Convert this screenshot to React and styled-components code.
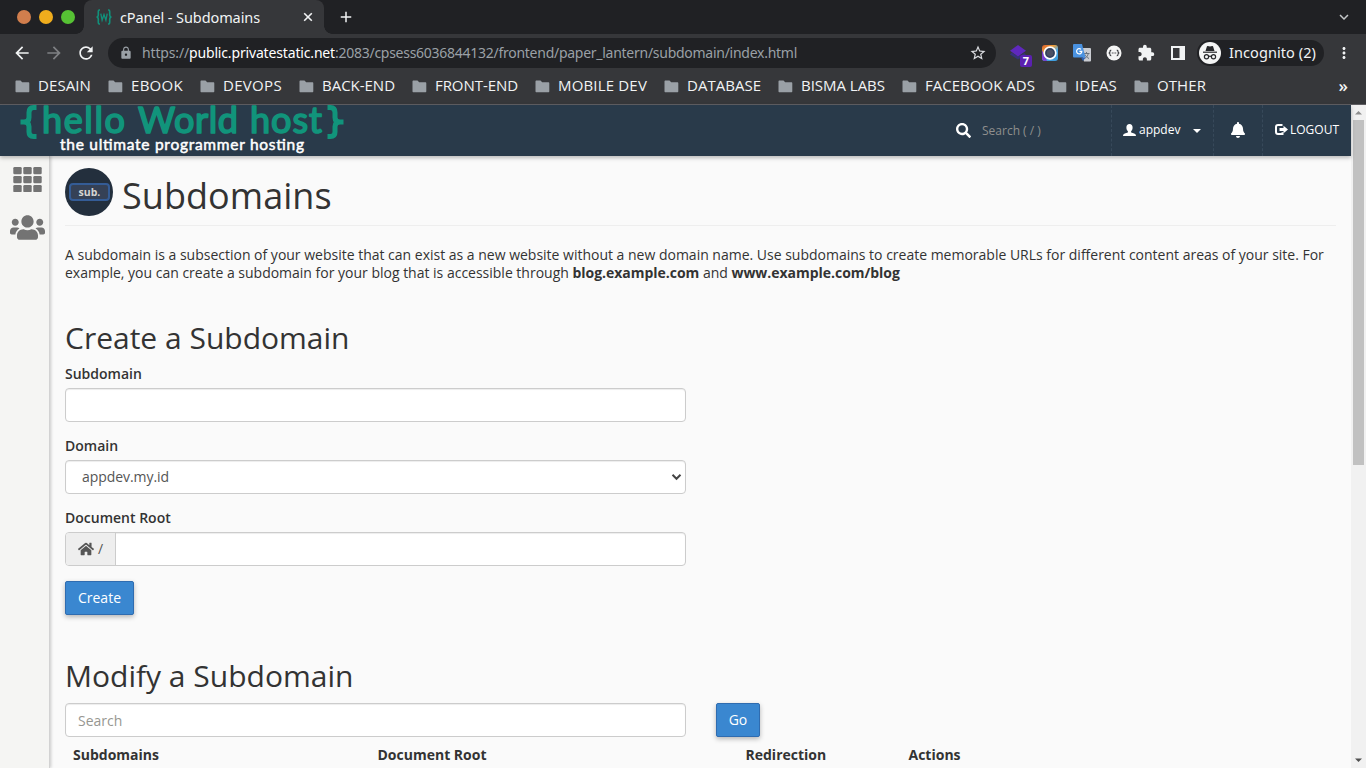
import React, { useLayoutEffect, useRef } from 'react';
import styled, { createGlobalStyle, css } from 'styled-components';
import {
  MdArrowBack, MdArrowForward, MdRefresh, MdLock, MdStarBorder, MdExtension,
  MdAdd, MdMoreVert, MdKeyboardArrowDown,
} from 'react-icons/md';
import { FaSearch, FaHome, FaUsers, FaBell } from 'react-icons/fa';

const Global = createGlobalStyle`
  * { box-sizing: border-box; }
  html, body { margin: 0; height: 768px; overflow: hidden; }
  body { font: 14px/18px "Open Sans", sans-serif; color: #333; background: #fafafa; }
  h1, h2, p { margin: 0; font-weight: 400; }
  svg { display: block; flex: none; }
`;

const Window = styled.div`
  width: 1366px;
  height: 768px;
  display: flex;
  flex-direction: column;
  overflow: hidden;
`;

/* Label whose letter spacing is tuned so it fills a fixed width. */
const FitSpan = styled.span`
  white-space: pre;
  flex: none;
`;
function Fit({ width, children, ...rest }) {
  const ref = useRef(null);
  useLayoutEffect(() => {
    const el = ref.current;
    el.style.letterSpacing = '0px';
    const natural = el.getBoundingClientRect().width;
    const spacing = (width - natural) / el.textContent.length;
    el.style.letterSpacing = `${spacing}px`;
  }, [width, children]);
  return <FitSpan ref={ref} {...rest}>{children}</FitSpan>;
}

/* ---------- browser frame ---------- */
const TabStrip = styled.div`
  height: 34px;
  flex: none;
  background: #202124;
  display: flex;
  align-items: center;
  padding: 0 13px 0 17px;
  font-family: "Noto Sans", sans-serif;
  color: #f1f3f4;
`;
const Lights = styled.div`
  display: flex;
  gap: 8px;
  width: 67px;
`;
const Light = styled.i`
  width: 14px;
  height: 14px;
  border-radius: 50%;
  background: ${(p) => p.$c};
`;
const Tab = styled.div`
  width: 240px;
  height: 34px;
  display: flex;
  align-items: center;
  padding: 0 11px 0 12px;
  background: #36373a;
  border-radius: 8px 8px 0 0;
  color: #f1f3f4;
  font-size: 14.5px;
  position: relative;
  & > span { margin-top: -1px; }
  & > svg:last-child { margin-left: auto; }
  &::before, &::after {
    content: "";
    position: absolute;
    bottom: 0;
    width: 8px;
    height: 8px;
  }
  &::before { left: -8px; background: radial-gradient(circle at 0 0, transparent 7.5px, #36373a 8px); }
  &::after { right: -8px; background: radial-gradient(circle at 100% 0, transparent 7.5px, #36373a 8px); }
`;
const Favicon = styled.svg`
  margin-right: 8px;
`;
const NewTab = styled.div`
  margin-left: 13px;
  flex: 1;
`;

const Toolbar = styled.div`
  height: 38px;
  flex: none;
  background: #36373a;
  display: flex;
  align-items: center;
  padding: 0 13px 0 12px;
  color: #f1f3f4;
  font-family: "Noto Sans", sans-serif;
`;
const NavButtons = styled.div`
  display: flex;
  align-items: center;
  gap: 12px;
  width: 96px;
  & > :nth-child(2) { color: #7f8184; }
`;
const Omnibox = styled.div`
  width: 888px;
  height: 30px;
  border-radius: 15px;
  background: #202124;
  display: flex;
  align-items: center;
  padding: 0 9px 0 11px;
  color: #9aa0a6;
  font-size: 14px;
  & > svg:first-child { margin-right: 9px; }
  & > svg:last-child { margin-left: auto; color: #dadce0; }
`;
const Host = styled(Fit)`color: #fff;`;
const Extensions = styled.div`
  margin-left: 13px;
  display: flex;
  align-items: center;
  gap: 14px;
  width: 188px;
`;
const PurpleExt = styled.div`
  position: relative;
  width: 18px;
  height: 18px;
`;
const ExtBadge = styled.span`
  position: absolute;
  left: 11px;
  top: 11px;
  width: 12px;
  height: 12px;
  border-radius: 2px;
  background: #5b21b0;
  color: #fff;
  font: bold 11px/12px "Noto Sans", sans-serif;
  text-align: center;
`;
const Incognito = styled.div`
  width: 127px;
  height: 26px;
  border-radius: 13px;
  background: #202124;
  display: flex;
  align-items: center;
  gap: 8px;
  padding-left: 2px;
  font-size: 14.5px;
  & > span { margin-top: -2px; }
`;
const MenuDots = styled.div`
  margin-left: auto;
`;

const Bookmarks = styled.div`
  height: 33px;
  flex: none;
  background: #36373a;
  border-bottom: 1px solid #5f5e62;
  display: flex;
  align-items: center;
  gap: 17px;
  padding: 0 18px 4px 15px;
  font: 15px/20px "Open Sans", sans-serif;
  color: #f1f3f4;
`;
const Bookmark = styled.div`
  display: flex;
  align-items: center;
  gap: 8px;
  & > span { margin: -2px 0 0; }
`;
const More = styled.span`
  margin: -1px 0 0 auto;
  font-size: 17px;
  font-weight: 600;
`;

/* ---------- page ---------- */
const PageArea = styled.div`
  flex: 1;
  min-height: 0;
  display: flex;
`;
const Page = styled.div`
  width: 1351px;
  display: flex;
  flex-direction: column;
`;
const Header = styled.header`
  height: 51px;
  flex: none;
  background: #293a4a;
  box-shadow: 0 2px 4px rgba(0, 0, 0, 0.26);
  position: relative;
  display: flex;
  color: #fff;
  font-size: 12px;
`;
const LogoSvg = styled.svg`
  margin-left: 18px;
  overflow: visible;
`;
const HeaderSearch = styled.div`
  margin-left: auto;
  width: 155px;
  display: flex;
  align-items: center;
  gap: 11px;
  color: #8f8f8d;
  & > svg { color: #fff; margin-bottom: 1px; }
`;
const HeaderItem = styled.div`
  width: ${(p) => p.$w}px;
  border-left: 1px dashed #37495a;
  display: flex;
  align-items: center;
  padding-left: ${(p) => p.$pad}px;
  padding-bottom: 2px;
  gap: ${(p) => p.$gap || 2}px;
  & > svg:nth-of-type(2) { margin-left: 10px; margin-top: 3px; }
`;
const Body = styled.div`
  flex: 1;
  min-height: 0;
  display: flex;
`;
const Sidebar = styled.nav`
  width: 50px;
  flex: none;
  background: #f5f5f3;
  border-right: 1px solid #d2d2d2;
  box-shadow: 1px 0 3px rgba(0, 0, 0, 0.2);
  padding: 11px 0 0 10px;
  display: flex;
  flex-direction: column;
  gap: 18px;
  color: #737373;
`;
const Main = styled.main`
  flex: 1;
  min-width: 0;
  padding: 12px 15px 0;
  overflow: hidden;
`;
const TitleRow = styled.div`
  display: flex;
  gap: 9px;
  height: 58px;
  border-bottom: 1px solid #eee;
`;
const Title = styled.h1`
  font-size: 36px;
  line-height: 40px;
  padding-top: 8px;
  letter-spacing: 0.05px;
`;
const Disc = styled.div`
  width: 48px;
  height: 48px;
  border-radius: 50%;
  background: #232f3d;
  display: flex;
  align-items: center;
  justify-content: center;
`;
const DiscTag = styled.span`
  width: 41px;
  height: 18px;
  border: 2px solid #345c96;
  border-radius: 4px;
  background: #354156;
  color: #d5d5d2;
  font: bold 10.5px/14px "Open Sans", sans-serif;
  text-align: center;
  padding-left: 1px;
`;
const Intro = styled.p`
  margin-top: 20px;
  letter-spacing: -0.006px;
  & b { letter-spacing: -0.03px; }
`;
const Heading = styled.h2`
  font-size: 30px;
  line-height: 33px;
  margin-top: ${(p) => p.$top}px;
`;
const Field = styled.div`
  width: 621px;
  margin-top: ${(p) => p.$top}px;
`;
const Label = styled.div`
  font-weight: 600;
  margin-bottom: 5px;
`;
const boxed = css`
  height: 34px;
  border: 1px solid #ccc;
  border-radius: 4px;
  background: #fff;
  box-shadow: inset 0 1px 1px rgba(0, 0, 0, 0.075);
`;
const Box = styled.div`
  ${boxed}
  width: 621px;
  display: flex;
  align-items: center;
  color: #555;
`;
const Select = styled(Box)`
  justify-content: space-between;
  padding: 0 3px 0 16px;
  letter-spacing: -0.06px;
`;
const Addon = styled.span`
  width: 50px;
  height: 32px;
  background: #eee;
  border-right: 1px solid #ccc;
  border-radius: 3px 0 0 3px;
  display: flex;
  align-items: center;
  gap: 4px;
  padding-left: 12px;
`;
const SearchBox = styled(Box)`
  padding: 1px 0 0 12px;
  color: #979791;
`;
const Button = styled.button`
  height: 34px;
  width: ${(p) => p.$w}px;
  padding: 0;
  border: 1px solid #2f6cb0;
  border-radius: 2px;
  background: #3a87d0;
  color: #fff;
  font: 14px/20px "Open Sans", sans-serif;
  box-shadow: 0 2px 5px rgba(0, 0, 0, 0.28);
  margin-top: ${(p) => p.$top || 0}px;
`;
const SearchRow = styled.div`
  display: flex;
  gap: 30px;
  margin-top: 11px;
`;
const TableHead = styled.div`
  display: grid;
  grid-template-columns: 304.5px 368px 163px 1fr;
  padding: 9px 8px 0;
  font-weight: 700;
`;
const Scrollbar = styled.div`
  width: 15px;
  background: #f1f1f1;
  display: flex;
  flex-direction: column;
  align-items: center;
  justify-content: space-between;
  padding: 5px 0;
`;
const Thumb = styled.div`
  width: 11px;
  height: 345px;
  background: #c1c1c1;
  margin: 5px 0 auto;
`;

const BOOKMARKS = [
  ['DESAIN', 53], ['EBOOK', 52], ['DEVOPS', 59], ['BACK-END', 73], ['FRONT-END', 83],
  ['MOBILE DEV', 89], ['DATABASE', 74], ['BISMA LABS', 84], ['FACEBOOK ADS', 110],
  ['IDEAS', 42], ['OTHER', 49],
];

const FolderIcon = () => (
  <svg width="15" height="13" viewBox="0 0 15 13">
    <path d="M1.500 0.500h4l1.700 1.800h6.100c.6 0 1 .4 1 1v8c0 .6-.4 1-1 1H1.500c-.6 0-1-.4-1-1V1.500c0-.6.4-1 1-1z" fill="#9aa0a6" />
  </svg>
);

const CloseIcon = () => (
  <svg width="10" height="10" viewBox="0 0 10 10">
    <path d="M1.200 1.200l7.600 7.600M8.800 1.200l-7.600 7.600" stroke="#f1f3f4" strokeWidth="1.600" />
  </svg>
);

const Logo = () => (
  <LogoSvg width="330" height="51" viewBox="0 0 330 51">
    <g fill="none" stroke="#11947b" strokeWidth="5">
      <path d="M18.500 2.500h-3q-4.500 0-4.500 5v5q0 4.500-5 4.500h-3.500h3.500q5 0 5 4.500v5.500q0 4.500 4.500 4.500h3" />
      <path d="M309.500 2.500h3q4.500 0 4.500 5v5q0 4.500 5 4.500h3.500h-3.500q-5 0-5 4.500v5.500q0 4.500-4.500 4.500h-3" />
    </g>
    <g fill="#11947b" stroke="#11947b" strokeWidth="1.700" strokeLinejoin="round" fontFamily="Lato, sans-serif" fontWeight="400" fontSize="36">
      <text x="24" y="27.500" textLength="83" lengthAdjust="spacing">hello</text>
      <text x="120" y="27.500" textLength="100" lengthAdjust="spacing">World</text>
      <text x="232" y="27.500" textLength="72" lengthAdjust="spacing">host</text>
    </g>
    <text x="42" y="45" fill="#fff" stroke="#fff" strokeWidth="0.5" fontFamily="Lato, sans-serif" fontWeight="400" fontSize="15.500" textLength="244">the ultimate programmer hosting</text>
  </LogoSvg>
);

const StackIcon = () => (
  <svg width="18" height="18" viewBox="0 0 18 18">
    <path d="M1 10.500l8 5 8-5-1.500-1.500L9 12.500 2.500 8.500z" fill="#35327a" />
    <path d="M9 1l8 5.800-8 5.700-8-5.700z" fill="#5f28bd" />
  </svg>
);

const CameraIcon = () => (
  <svg width="18" height="18" viewBox="0 0 18 18">
    <defs>
      <linearGradient id="cam" x1="0" y1="0" x2="0.6" y2="1">
        <stop offset="0" stopColor="#d95a2c" />
        <stop offset="0.35" stopColor="#efa03a" />
        <stop offset="0.65" stopColor="#4ca9e8" />
        <stop offset="1" stopColor="#3f9ddd" />
      </linearGradient>
    </defs>
    <rect x="1" y="1" width="16" height="16" rx="3" fill="url(#cam)" />
    <path d="M1 6v8a3 3 0 0 0 3 3h2z" fill="#7b3fd0" />
    <circle cx="9" cy="9" r="5.800" fill="#33405c" stroke="#fff" strokeWidth="1.700" />
    <circle cx="9" cy="9" r="3.200" fill="#4b5064" />
  </svg>
);

const TranslateIcon = () => (
  <svg width="18" height="18" viewBox="0 0 18 18">
    <path d="M7 4h10a1 1 0 0 1 1 1v11.500a1 1 0 0 1-1 1h-6z" fill="#c9ccd1" />
    <path d="M10.500 9.500h6M13.500 8v1.500M11.500 14.500c2-1 3.300-2.600 3.800-5M12 10.500c.8 1.800 2 3 4 4" fill="none" stroke="#69737e" strokeWidth="1" />
    <path d="M1 0h8l3.500 13.500H1a1 1 0 0 1-1-1V1a1 1 0 0 1 1-1z" fill="#4a92e0" />
    <path d="M8 13.500h4.500L10 17z" fill="#2d62b5" />
    <path d="M8 5.400a2.600 2.600 0 1 0 .8 2H6.400" fill="none" stroke="#fff" strokeWidth="1.200" />
  </svg>
);

const BracesIcon = () => (
  <svg width="18" height="18" viewBox="0 0 18 18">
    <circle cx="9" cy="9" r="7.500" fill="#f5f5f5" />
    <g fill="none" stroke="#35363a" strokeWidth="1.100">
      <path d="M6.300 6.300H5.900q-.9 0-.9.9v.9l-.9.900.9.900v.9q0 .9.900.9h.4M11.700 6.300h.4q.9 0 .9.9v.9l.9.900-.9.900v.9q0 .9-.9.900h-.4" />
      <path d="M6.800 9h4.400" strokeDasharray="1 .7" />
    </g>
  </svg>
);

const IncognitoIcon = () => (
  <svg width="22" height="22" viewBox="0 0 22 22">
    <circle cx="11" cy="11" r="11" fill="#f4f5f5" />
    <path d="M6.500 9l1.400-4.600q.2-.6.900-.4l2.200.6 2.200-.6q.7-.2.9.4L15.500 9z" fill="#26272a" />
    <path d="M4 9.600h14v1.200H4z" fill="#26272a" />
    <g fill="none" stroke="#26272a" strokeWidth="1.200">
      <circle cx="7.500" cy="14.800" r="2.100" />
      <circle cx="14.500" cy="14.800" r="2.100" />
      <path d="M9.600 14.500q1.400-.8 2.800 0" />
    </g>
  </svg>
);

const PanelIcon = () => (
  <svg width="18" height="18" viewBox="0 0 18 18">
    <path d="M2 2h14v14H2zM4 4v10h6.500V4z" fillRule="evenodd" fill="#f1f3f4" />
  </svg>
);

const GridIcon = () => (
  <svg width="29" height="25" viewBox="0 0 29 25">
    {[0, 9, 18].map((y) => [0.3, 10.300, 20.300].map((x) => (
      <rect key={`${x}-${y}`} x={x} y={y} width="8.400" height="7.200" rx="1.300" fill="#737373" />
    )))}
  </svg>
);
const GridSlot = styled.div`padding-left: 3px;`;

const UserIcon = () => (
  <svg width="13" height="12" viewBox="0 0 13 12">
    <path d="M6.500 0C8.500 0 9.600 1.300 9.600 3.400c0 1.600-.6 3-1.500 3.800v1c.4.500 3 1.100 4 1.700.6.400.9 1.100.9 2.100H0c0-1 .3-1.700.9-2.100 1-.6 3.600-1.200 4-1.700v-1C4 6.400 3.400 5 3.400 3.400 3.400 1.300 4.500 0 6.500 0z" fill="#fff" />
  </svg>
);

const CaretIcon = () => (
  <svg width="8" height="4" viewBox="0 0 8 4">
    <path d="M0 0h8L4 4z" fill="#fff" />
  </svg>
);

const LogoutIcon = () => (
  <svg width="13" height="11" viewBox="0 0 13 11">
    <path d="M7.500 1H3Q1 1 1 3v5q0 2 2 2h4.500V8.300" fill="none" stroke="#fff" strokeWidth="2" />
    <path d="M4.500 4.100H8.500V1.700L13 5.500 8.500 9.300V6.900H4.500z" fill="#fff" />
  </svg>
);

export default function App() {
  return (
    <Window>
      <Global />
      <TabStrip>
        <Lights>
          <Light $c="#d17e4d" />
          <Light $c="#f0ad1d" />
          <Light $c="#56c234" />
        </Lights>
        <Tab>
          <Favicon width="16" height="16" viewBox="0 0 16 16" fill="none" stroke="#11917b" strokeWidth="1.600">
            <path d="M4 1H3.300Q2.300 1 2.300 2.500v3.200Q2.300 8 .5 8q1.800 0 1.800 2.300v3.200q0 1.500 1 1.500H4" />
            <path d="M12 1h.7q1 0 1 1.500v3.200q0 2.300 1.800 2.300-1.800 0-1.800 2.300v3.200q0 1.500-1 1.500H12" />
            <path d="M4.800 4.700l1.300 6.500L8 5.500l1.900 5.700 1.300-6.500" strokeWidth="1.300" />
          </Favicon>
          <Fit width={140}>cPanel - Subdomains</Fit>
          <CloseIcon />
        </Tab>
        <NewTab><MdAdd size={18} /></NewTab>
        <MdKeyboardArrowDown size={18} color="#c4c7c9" />
      </TabStrip>

      <Toolbar>
        <NavButtons>
          <MdArrowBack size={20} />
          <MdArrowForward size={20} />
          <MdRefresh size={20} />
        </NavButtons>
        <Omnibox>
          <MdLock size={14} />
          <Fit width={47}>https://</Fit>
          <Host width={146}>public.privatestatic.net</Host>
          <Fit width={462}>:2083/cpsess6036844132/frontend/paper_lantern/subdomain/index.html</Fit>
          <MdStarBorder size={18} />
        </Omnibox>
        <Extensions>
          <PurpleExt>
            <StackIcon />
            <ExtBadge>7</ExtBadge>
          </PurpleExt>
          <CameraIcon />
          <TranslateIcon />
          <BracesIcon />
          <MdExtension size={18} />
          <PanelIcon />
        </Extensions>
        <Incognito>
          <IncognitoIcon />
          <Fit width={87}>Incognito (2)</Fit>
        </Incognito>
        <MenuDots><MdMoreVert size={18} /></MenuDots>
      </Toolbar>

      <Bookmarks>
        {BOOKMARKS.map(([name, w]) => (
          <Bookmark key={name}>
            <FolderIcon />
            <Fit width={w}>{name}</Fit>
          </Bookmark>
        ))}
        <More>»</More>
      </Bookmarks>

      <PageArea>
        <Page>
          <Header>
            <Logo />
            <HeaderSearch>
              <FaSearch size={15} />
              <span>Search ( / )</span>
            </HeaderSearch>
            <HeaderItem $w={102} $pad={11} $gap={3}>
              <UserIcon />
              <span>appdev</span>
              <CaretIcon />
            </HeaderItem>
            <HeaderItem $w={49} $pad={16}>
              <FaBell size={16} />
            </HeaderItem>
            <HeaderItem $w={89} $pad={12}>
              <LogoutIcon />
              <span>LOGOUT</span>
            </HeaderItem>
          </Header>
          <Body>
            <Sidebar>
              <GridSlot><GridIcon /></GridSlot>
              <FaUsers size={35} />
            </Sidebar>
            <Main>
              <TitleRow>
                <Disc><DiscTag>sub.</DiscTag></Disc>
                <Title>Subdomains</Title>
              </TitleRow>
              <Intro>
                A subdomain is a subsection of your website that can exist as a new website without a new
                domain name. Use subdomains to create memorable URLs for different content areas of your
                site. For example, you can create a subdomain for your blog that is accessible
                through <b>blog.example.com</b> and <b>www.example.com/blog</b>
              </Intro>
              <Heading $top={39}>Create a Subdomain</Heading>
              <Field $top={11}>
                <Label>Subdomain</Label>
                <Box />
              </Field>
              <Field $top={15}>
                <Label>Domain</Label>
                <Select>
                  <span>appdev.my.id</span>
                  <svg width="11" height="8" viewBox="0 0 11 8">
                    <path d="M1.500 1.800L5.500 5.800L9.500 1.800" fill="none" stroke="#444" strokeWidth="2" />
                  </svg>
                </Select>
              </Field>
              <Field $top={15}>
                <Label>Document Root</Label>
                <Box><Addon><FaHome size={16} /><span>/</span></Addon></Box>
              </Field>
              <Button $w={69} $top={15}>Create</Button>
              <Heading $top={44}>Modify a Subdomain</Heading>
              <SearchRow>
                <SearchBox>Search</SearchBox>
                <Button $w={44}>Go</Button>
              </SearchRow>
              <TableHead>
                <span>Subdomains</span>
                <span>Document Root</span>
                <span>Redirection</span>
                <span>Actions</span>
              </TableHead>
            </Main>
          </Body>
        </Page>
        <Scrollbar>
          <svg width="7" height="5" viewBox="0 0 7 5"><path d="M0 4.500L3.500 1L7 4.500z" fill="#8d8d8d" /></svg>
          <Thumb />
          <svg width="7" height="5" viewBox="0 0 7 5"><path d="M0 .5L3.500 4L7 .5z" fill="#505050" /></svg>
        </Scrollbar>
      </PageArea>
    </Window>
  );
}
